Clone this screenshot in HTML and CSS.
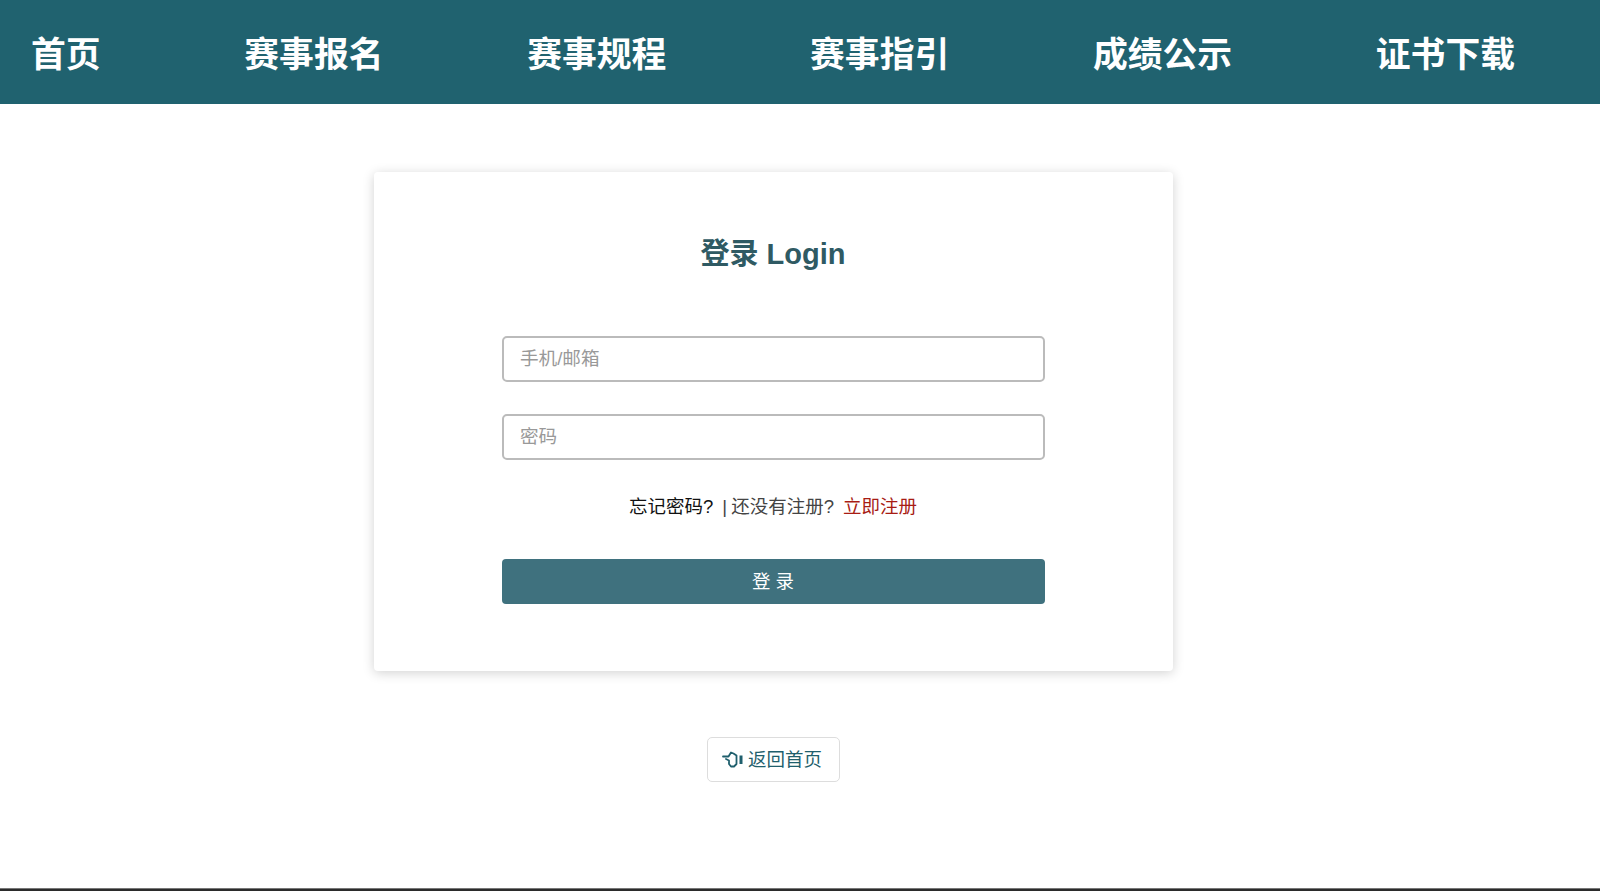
FILE: index.html
```html
<!DOCTYPE html>
<html lang="zh">
<head>
  <meta charset="UTF-8">
  <title>登录 Login</title>
  <link rel="stylesheet" href="styles.css">
</head>
<body>
  <nav class="nav">
    <a href="#">首页</a>
    <a href="#">赛事报名</a>
    <a href="#">赛事规程</a>
    <a href="#">赛事指引</a>
    <a href="#">成绩公示</a>
    <a href="#">证书下载</a>
  </nav>

  <main class="main">
    <form class="card">
      <h1>登录 Login</h1>
      <input type="text" placeholder="手机/邮箱">
      <input type="password" placeholder="密码">
      <p class="links"><a href="#" class="forgot">忘记密码?</a><span class="sep">|</span>还没有注册?<a href="#" class="register">立即注册</a></p>
      <button type="submit">登 录</button>
    </form>

    <a href="#" class="back">
      <svg class="back-icon" width="21" height="17" viewBox="0 0 21 17" fill="none" stroke="#1f5f6d" stroke-width="1.8" stroke-linejoin="round" stroke-linecap="round">
        <path d="M1 5.500h5.500L9 1.500l2.500 1 3 2v8.500l-2.500 2.500H9L7 13V9.500L4 8"/>
        <path d="M19 4.500v8.500" stroke-width="3" stroke-linecap="butt"/>
      </svg>
      <span class="back-text">返回首页</span>
    </a>
  </main>
  <footer class="footer"></footer>
</body>
</html>
```

FILE: styles.css
```css
body {
  margin: 0;
  background: #fff;
  font-family: "Liberation Sans", "Noto Sans CJK SC", sans-serif;
  color: #222;
}

.nav {
  display: flex;
  justify-content: space-between;
  align-items: center;
  box-sizing: border-box;
  height: 104px;
  padding: 0 85px 0 31px;
  background: #20626f;
}

.nav a {
  color: #fff;
  font-size: 34.8px;
  font-weight: 700;
  text-decoration: none;
}

.main {
  display: flex;
  flex-direction: column;
  align-items: center;
  padding: 68px 54px 0 0;
}

.card {
  box-sizing: border-box;
  width: 799px;
  height: 499px;
  padding: 60px 128px 0;
  display: flex;
  flex-direction: column;
  background: #fff;
  border-radius: 4px;
  box-shadow: 0 2px 12px rgba(0, 0, 0, 0.18);
}

.card h1 {
  margin: 0 0 60px;
  text-align: center;
  font-size: 29px;
  line-height: 44px;
  color: #2f5a63;
}

.card input {
  box-sizing: border-box;
  height: 45.5px;
  margin-bottom: 32.5px;
  padding: 0 16.500px;
  border: 2px solid #bbb;
  border-radius: 5px;
  font-family: inherit;
  font-size: 18.6px;
}

.card input::placeholder {
  color: #999;
}

.links {
  margin: 0 0 38px;
  padding-top: 1px;
  text-align: center;
  font-size: 18.5px;
  line-height: 27px;
  color: #444;
}

.links a {
  text-decoration: none;
}

.sep {
  margin: 0 4px 0 9px;
}

.forgot {
  color: #111;
}

.register {
  margin-left: 9px;
  color: #a81c14;
}

.card button {
  height: 45px;
  margin-top: 1px;
  padding: 0 0 3px;
  border: none;
  border-radius: 4px;
  background: #3f717e;
  color: #fff;
  font-family: inherit;
  font-size: 18.5px;
}

.back {
  box-sizing: border-box;
  display: flex;
  align-items: center;
  gap: 5px;
  margin-top: 66px;
  padding: 0 0 0 14.5px;
  width: 133px;
  height: 45px;
  border: 1.5px solid #ddd;
  border-radius: 5px;
  color: #1f5f6d;
  font-size: 18.5px;
  white-space: nowrap;
  text-decoration: none;
}

.back-icon {
  flex: none;
}

.back-text {
  padding-bottom: 3px;
}

.footer {
  margin-top: 106px;
  height: 2px;
  border-top: 1px solid #777;
  background: #2b2b2b;
}
```
